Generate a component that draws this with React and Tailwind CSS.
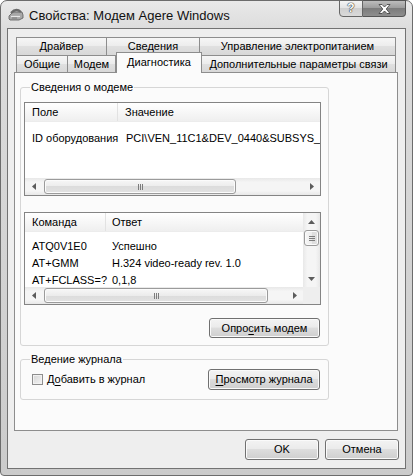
import React from 'react';

function ModemIcon() {
  return (
    <svg width="16" height="14" viewBox="0 0 16 14" className="ml-[1px] mt-[6px] shrink-0">
      <path d="M1 9 L5 5 H14 L15 8 V11 L11 13 H2 L1 12Z" fill="#a8a8a8" stroke="#5a5a5a" strokeWidth="0.8" />
      <path d="M3 6 Q8 0.5 13 5" stroke="#6a6a6a" strokeWidth="2.2" fill="none" />
      <path d="M3 9.5 H12" stroke="#e6e6e6" strokeWidth="1.2" />
      <path d="M4 11 H9" stroke="#7a7a7a" strokeWidth="1" />
    </svg>
  );
}

function Arrow({ dir }) {
  const paths = {
    left: 'M4 0L0 3.5L4 7Z',
    right: 'M0 0L4 3.5L0 7Z',
    up: 'M0 4L3.5 0L7 4Z',
    down: 'M0 0L7 0L3.5 4Z',
  };
  const horiz = dir === 'left' || dir === 'right';
  return (
    <div className="flex h-[17px] w-[17px] shrink-0 items-center justify-center">
      <svg width={horiz ? 4 : 7} height={horiz ? 7 : 4}>
        <path d={paths[dir]} fill="#5c5c5c" />
      </svg>
    </div>
  );
}

function Grip({ vertical }) {
  return (
    <div className={vertical ? 'flex flex-col gap-[1px]' : 'flex gap-[1px]'}>
      {[0, 1, 2].map((i) => (
        <div key={i} className={vertical ? 'h-[1px] w-[6px] bg-[#7c7c7c]' : 'h-[6px] w-[1px] bg-[#7c7c7c]'} />
      ))}
    </div>
  );
}

function HScroll({ thumb }) {
  return (
    <div className="flex h-[17px] shrink-0 items-center bg-[linear-gradient(#e8e8e8,#f5f5f5_25%,#f5f5f5_75%,#e8e8e8)]">
      <Arrow dir="left" />
      <div className="flex flex-1 items-center">
        <div className={`ml-[2px] flex h-[15px] items-center justify-center rounded-[3px] border border-[#9b9b9b] bg-[linear-gradient(#f7f7f7,#ececec_50%,#dcdcdc_50%,#e2e2e2)] shadow-[inset_0_0_0_1px_#fbfbfb] ${thumb}`}>
          <Grip />
        </div>
      </div>
      <Arrow dir="right" />
    </div>
  );
}

function VScroll() {
  return (
    <div className="flex w-[17px] shrink-0 flex-col bg-[linear-gradient(90deg,#e8e8e8,#f5f5f5_25%,#f5f5f5_75%,#e8e8e8)]">
      <Arrow dir="up" />
      <div className="mx-[1px] flex h-[16px] items-center justify-center rounded-[3px] border border-[#9b9b9b] bg-[linear-gradient(90deg,#f7f7f7,#ececec_50%,#dcdcdc_50%,#e2e2e2)] shadow-[inset_0_0_0_1px_#fbfbfb]">
        <Grip vertical />
      </div>
      <div className="flex-1" />
      <Arrow dir="down" />
      <div className="h-[17px] bg-[#eeeeee]" />
    </div>
  );
}

function Button({ children, className }) {
  return (
    <div
      className={`flex items-center justify-center rounded-[3px] border border-[#707070] bg-[linear-gradient(#f3f3f3,#ebebeb_45%,#dddddd_50%,#cfcfcf)] shadow-[inset_0_0_0_1px_#fafafa] ${className}`}
    >
      {children}
    </div>
  );
}

function Tab({ children, className }) {
  return (
    <div
      className={`flex items-center justify-center border-[#8d8d8d] bg-[linear-gradient(#f6f6f6,#ececec_50%,#e0e0e0_50%,#d8d8d8)] ${className}`}
    >
      {children}
    </div>
  );
}

export default function App() {
  return (
    <div className="h-[476px] w-[413px] bg-white font-['Liberation_Sans',Arial,sans-serif] text-[11px] leading-[13px] text-black">
      <div className="flex h-full flex-col rounded-t-[7px] rounded-b-[4px] border border-[#6c6c6c] bg-[linear-gradient(180deg,#e9e9e9,#dcdcdc_6%,#d4d4d4_50%,#cbcbcb)] px-[6px] pb-[6px]">
        {/* title bar */}
        <div className="flex h-[27px] shrink-0 items-start">
          <ModemIcon />
          <div className="ml-[5px] mt-[7px] text-[13px] leading-[15px] text-[#111]">Свойства: Модем Agere Windows</div>
          <div className="-mt-px ml-auto flex">
            <div className="flex h-[17px] w-[24px] items-center justify-center rounded-bl-[4px] border border-[#666] bg-[linear-gradient(#f4f4f4,#e2e2e2_50%,#cfcfcf_50%,#dadada)] text-[12px] font-bold text-white [text-shadow:0_0_1px_#333,0_0_1px_#333,0_0_1px_#333]">
              ?
            </div>
            <div className="flex h-[17px] w-[43px] items-center justify-center rounded-br-[4px] border border-l-0 border-[#555] bg-[linear-gradient(#bdbdbd,#9a9a9a_50%,#7c7c7c_50%,#8e8e8e)]">
              <svg width="13" height="10" viewBox="0 0 13 10">
                <path d="M1 0.5 H4 L6.5 3 L9 0.5 H12 L8.2 5 L12 9.5 H9 L6.5 7 L4 9.5 H1 L4.8 5Z" fill="#fff" stroke="#3c3c3c" strokeWidth="0.8" />
              </svg>
            </div>
          </div>
        </div>

        {/* client area */}
        <div className="flex flex-1 flex-col border border-[#727272] bg-[#eeeeee] pl-[6px] pr-[6px] pt-[8px]">
          {/* tabs row 1 */}
          <div className="ml-[2px] flex h-[18px]">
            <Tab className="w-[90px] border-l border-t">Драйвер</Tab>
            <Tab className="w-[93px] border-l border-t">Сведения</Tab>
            <Tab className="w-[197px] border-l border-r border-t">Управление электропитанием</Tab>
          </div>
          {/* tabs row 2 */}
          <div className="ml-[2px] flex h-[17px] items-end">
            <Tab className="h-[17px] w-[51px] border-l border-t">Общие</Tab>
            <Tab className="h-[17px] w-[49px] border-l border-r border-t">Модем</Tab>
            <div className="relative z-10 -mb-px flex h-[21px] w-[86px] items-start justify-center border-l border-r border-t border-[#8d8d8d] bg-[#fbfbfb] pt-[3px]">
              Диагностика
            </div>
            <Tab className="h-[17px] w-[194px] border-r border-t">Дополнительные параметры связи</Tab>
          </div>

          {/* tab panel */}
          <div className="mr-[1px] flex h-[359px] shrink-0 flex-col border border-[#8d8d8d] bg-[#fbfbfb] pl-[5px] pt-[14px]">
            {/* group: modem info */}
            <div className="flex h-[259px] w-[309px] flex-col rounded-[3px] border border-[#d6d6d6] pl-[3px]">
              <div className="-mt-[7px] ml-[6px] w-fit bg-[#fbfbfb] px-[1px] leading-[13px]">Сведения о модеме</div>

              <div className="mt-[8px] flex h-[94px] w-[297px] flex-col overflow-hidden border border-[#848484] bg-white">
                <div className="flex h-[19px] shrink-0 items-center border-b border-[#ececec] bg-[linear-gradient(#ffffff,#f7f7f7_50%,#efefef)]">
                  <div className="flex h-full w-[93px] items-center border-r border-[#e2e2e2] pl-[7px]">Поле</div>
                  <div className="pl-[7px]">Значение</div>
                </div>
                <div className="mt-[8px] flex h-[17px] items-center overflow-hidden whitespace-nowrap">
                  <div className="w-[93px] shrink-0 pl-[7px]">ID оборудования</div>
                  <div className="pl-[8px]">PCI\VEN_11C1&amp;DEV_0440&amp;SUBSYS_0</div>
                </div>
                <div className="flex-1" />
                <HScroll thumb="w-[192px]" />
              </div>

              <div className="mt-[16px] flex h-[93px] w-[297px] overflow-hidden border border-[#848484] bg-white">
                <div className="flex min-w-0 flex-1 flex-col">
                  <div className="flex h-[19px] shrink-0 items-center border-b border-[#ececec] bg-[linear-gradient(#ffffff,#f7f7f7_50%,#efefef)]">
                    <div className="flex h-full w-[81px] items-center border-r border-[#e2e2e2] pl-[7px]">Команда</div>
                    <div className="pl-[6px]">Ответ</div>
                  </div>
                  <div className="flex-1 overflow-hidden whitespace-nowrap pt-[6px]">
                    <div className="flex h-[17px] items-center">
                      <div className="w-[81px] shrink-0 pl-[7px]">ATQ0V1E0</div>
                      <div className="pl-[6px]">Успешно</div>
                    </div>
                    <div className="flex h-[17px] items-center">
                      <div className="w-[81px] shrink-0 pl-[7px]">AT+GMM</div>
                      <div className="pl-[6px]">H.324 video-ready rev. 1.0</div>
                    </div>
                    <div className="flex h-[17px] items-center">
                      <div className="w-[81px] shrink-0 pl-[7px]">AT+FCLASS=?</div>
                      <div className="pl-[6px]">0,1,8</div>
                    </div>
                  </div>
                  <HScroll thumb="w-[224px]" />
                </div>
                <VScroll />
              </div>

              <div className="mt-[13px] flex justify-end pr-[8px]">
                <Button className="h-[20px] w-[111px]">
                  <span>
                    Опро<span className="underline underline-offset-[2px]">с</span>ить модем
                  </span>
                </Button>
              </div>
            </div>

            {/* group: logging */}
            <div className="mt-[13px] flex h-[41px] w-[309px] flex-col rounded-[3px] border border-[#d6d6d6]">
              <div className="-mt-[7px] ml-[9px] w-fit bg-[#fbfbfb] px-[1px] leading-[13px]">Ведение журнала</div>
              <div className="mt-[3px] flex h-[21px] items-center pr-[8px]">
                <div className="ml-[11px] h-[11px] w-[11px] shrink-0 border border-[#8e8e8e] bg-[linear-gradient(135deg,#d6d6d6,#f4f4f4)] shadow-[inset_0_0_0_1px_#f2f2f2]" />
                <div className="ml-[4px]">
                  Д<span className="underline underline-offset-[2px]">о</span>бавить в журнал
                </div>
                <Button className="ml-auto h-[21px] w-[112px]">
                  <span>
                    <span className="underline underline-offset-[2px]">П</span>росмотр журнала
                  </span>
                </Button>
              </div>
            </div>
          </div>

          {/* dialog buttons */}
          <div className="flex h-[37px] shrink-0 items-center justify-end gap-[6px]">
            <Button className="h-[21px] w-[74px]">OK</Button>
            <Button className="h-[21px] w-[74px]">Отмена</Button>
          </div>
        </div>
      </div>
    </div>
  );
}
